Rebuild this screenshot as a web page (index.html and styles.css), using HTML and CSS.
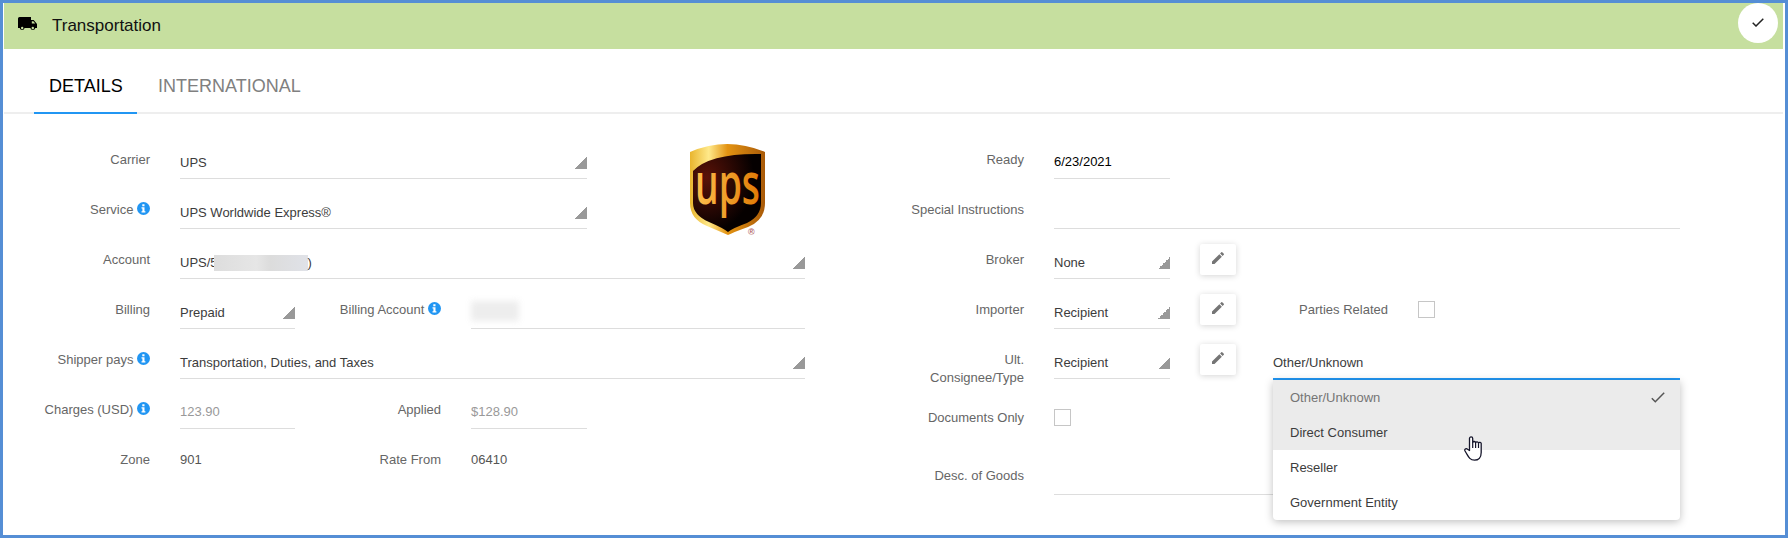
FILE: index.html
```html
<!DOCTYPE html>
<html lang="en">
<head>
<meta charset="utf-8">
<title>Transportation</title>
<link rel="stylesheet" href="styles.css">
</head>
<body>
<svg class="defs" width="0" height="0" aria-hidden="true">
  <symbol id="info" viewBox="0 0 13 13"><circle cx="6.5" cy="6.5" r="6.5" fill="#2196f3"/><path fill="#fff" d="M5.3 2.2h2.2v2H5.300zM4.500 5.200h3v4h.9v1.400H4.500V9.200h.9V6.600h-.9z"/></symbol>
  <symbol id="pencil" viewBox="0 0 24 24"><path fill="#757575" d="M3 17.250V21h3.750L17.810 9.940l-3.750-3.750L3 17.250zM20.710 7.040a1 1 0 0 0 0-1.410l-2.340-2.340a1 1 0 0 0-1.410 0l-1.830 1.830 3.750 3.750 1.830-1.830z"/></symbol>
</svg>
<main class="panel">
  <header class="bar">
    <svg class="truck" viewBox="0 0 19 14"><path fill="#000" d="M1.500 0H13v3h2.700L19 7v4h-1.700a2.500 2.500 0 0 1-4.900 0H6.600a2.500 2.500 0 0 1-4.900 0H0V1.500Q0 0 1.500 0z"/><path fill="#c6df9f" d="M13.800 4.200h1.600L17.200 6.500h-3.400z"/><circle cx="4.200" cy="11" r="1.200" fill="#c6df9f"/><circle cx="14.800" cy="11" r="1.200" fill="#c6df9f"/></svg>
    <h1 class="title">Transportation</h1>
    <button class="done"><svg width="12" height="9" viewBox="0 0 12 9"><path d="M.7 4.800 4 8 11.300.7" fill="none" stroke="#222" stroke-width="1.500"/></svg></button>
  </header>
  <nav class="tabs"><a class="tab active">DETAILS</a><a class="tab">INTERNATIONAL</a></nav>
  <div class="form">
    <section class="left">
      <div class="row"><label class="label">Carrier</label><div class="field wide select">UPS</div>
        <svg class="logo" viewBox="0 0 75 91">
          <defs>
            <linearGradient id="gold" x1="0" x2="1"><stop offset="0" stop-color="#e9b52e"/><stop offset=".25" stop-color="#ffe98a"/><stop offset=".5" stop-color="#e39312"/><stop offset="1" stop-color="#a95a08"/></linearGradient>
            <linearGradient id="letters" x1="0" x2="1"><stop offset="0" stop-color="#ffc04d"/><stop offset="1" stop-color="#e07a05"/></linearGradient>
            <radialGradient id="dark" cx=".2" cy=".3" r=".7"><stop offset="0" stop-color="#5a1208"/><stop offset="1" stop-color="#050000"/></radialGradient>
          </defs>
          <path fill="url(#gold)" d="M0 8Q37-8 75 8v51q0 17-17 24-14 5-20 8-7-3-21-9Q0 75 0 59z"/>
          <path fill="url(#dark)" d="M3 27Q20 9 71 10v49q0 13-14 20-14 5-19 9-5-4-19-10Q3 71 3 59z"/>
          <text class="logo-text" x="5" y="60" textLength="65" lengthAdjust="spacingAndGlyphs" fill="url(#letters)">ups</text>
          <text class="logo-mark" x="58" y="91" fill="#b36a6a">®</text>
        </svg>
      </div>
      <div class="row"><label class="label">Service <svg class="info"><use href="#info"/></svg></label><div class="field wide select">UPS Worldwide Express®</div></div>
      <div class="row"><label class="label">Account</label><div class="field full select">UPS/5<span class="redacted"></span>)</div></div>
      <div class="row"><label class="label">Billing</label><div class="field short select">Prepaid</div><label class="label second">Billing Account <svg class="info"><use href="#info"/></svg></label><div class="field rest"><span class="redacted soft"></span></div></div>
      <div class="row"><label class="label">Shipper pays <svg class="info"><use href="#info"/></svg></label><div class="field full select">Transportation, Duties, and Taxes</div></div>
      <div class="row"><label class="label">Charges (USD) <svg class="info"><use href="#info"/></svg></label><div class="field short input muted">123.90</div><label class="label second">Applied</label><div class="field applied input muted">$128.90</div></div>
      <div class="row"><label class="label">Zone</label><div class="static short">901</div><label class="label second">Rate From</label><div class="static">06410</div></div>
    </section>
    <section class="right">
      <div class="row"><label class="label">Ready</label><div class="field small input date">6/23/2021</div></div>
      <div class="row"><label class="label">Special Instructions</label><div class="field long"></div></div>
      <div class="row"><label class="label">Broker</label><div class="field small select">None</div><button class="edit"><svg><use href="#pencil"/></svg></button></div>
      <div class="row"><label class="label">Importer</label><div class="field small select">Recipient</div><button class="edit"><svg><use href="#pencil"/></svg></button><label class="label related">Parties Related</label><span class="checkbox"></span></div>
      <div class="row"><label class="label">Ult. Consignee/Type</label><div class="field small select">Recipient</div><button class="edit"><svg><use href="#pencil"/></svg></button>
        <div class="field open">Other/Unknown
          <ul class="menu">
            <li class="option hover chosen">Other/Unknown<svg width="14" height="11" viewBox="0 0 14 11"><path d="M.8 6.200 4.300 9.700 13.200.8" fill="none" stroke="#555" stroke-width="1.500"/></svg></li>
            <li class="option hover">Direct Consumer</li>
            <li class="option">Reseller</li>
            <li class="option">Government Entity</li>
          </ul>
          <svg class="pointer" viewBox="0 0 18 25"><path fill="#fff" stroke="#15152a" stroke-width="1.300" stroke-linejoin="round" d="M5.500 14.500V2.500a1.600 1.600 0 0 1 3.200 0V6.500a1.500 1.500 0 0 1 2.900.3 1.500 1.500 0 0 1 2.900.5 1.400 1.400 0 0 1 2.700.7v8.500c0 5-2.700 7.700-6.700 7.700-4.500 0-6-3.200-8-6.700L.9 14.700c-.7-2 1.600-2.500 2.600-1.400z"/><path stroke="#15152a" stroke-width="1.200" d="M8.700 6.500V12M11.600 7v5M14.500 7.500V12"/></svg>
        </div>
      </div>
      <div class="row docs"><label class="label">Documents Only</label><span class="checkbox"></span></div>
      <div class="row"><label class="label">Desc. of Goods</label><div class="field long"></div></div>
    </section>
  </div>
</main>
</body>
</html>
```

FILE: styles.css
```css
* { box-sizing: border-box; }
body { margin: 0; font: 13px/18px "Liberation Sans", Arial, sans-serif; color: #3c3c3c; background: #fff; }
.defs { position: absolute; }
.panel { height: 538px; border: 3px solid #558ed5; padding: 0 2px 0 1px; overflow: hidden; }
button { border: 0; padding: 0; background: #fff; display: flex; align-items: center; justify-content: center; }

.bar { display: flex; height: 46px; background: #c6df9f; padding: 0 5px 0 14px; }
.truck { width: 19px; height: 14px; margin-top: 14px; }
.title { margin: 0 auto 0 15px; font-size: 17px; font-weight: 400; line-height: 46px; color: #111; }
.done { width: 40px; height: 40px; border-radius: 50%; padding-bottom: 1px; }

.tabs { display: flex; height: 65px; padding-left: 30px; border-bottom: 2px solid #eee; }
.tab { height: 65px; padding: 0 15px; font-size: 18px; line-height: 74px; color: #808080; }
.tab + .tab { padding-left: 21px; }
.tab.active { width: 103px; color: #000; border-bottom: 2px solid #2196f3; }

.form { display: flex; padding-top: 15px; }
.left { width: 804px; flex: none; padding-left: 26px; }
.right { padding-left: 76px; }
.row { display: flex; height: 50px; }
.label { flex: none; width: 120px; padding-top: 22px; text-align: right; color: #666; }
.label.second { width: 146px; }
.label.related { width: 152px; margin-right: 30px; }
.info { width: 13px; height: 13px; vertical-align: -1px; }
.field { flex: none; height: 50px; margin-left: 30px; padding-top: 25px; border-bottom: 1px solid #ddd; }
.short { width: 115px; }
.wide { width: 407px; }
.full { width: 625px; }
.rest { width: 334px; padding-top: 22px; }
.applied { width: 116px; }
.small { width: 116px; }
.long { width: 626px; }
.input { padding-top: 24px; }
.date { color: #000; }
.muted { color: #999; }
.static { margin-left: 30px; padding-top: 22px; color: #555; }
.select { background: linear-gradient(135deg, transparent 50%, #999 50%) right 0 top 28px / 12px 12px no-repeat; }
.redacted { display: inline-block; width: 94px; height: 16px; margin-left: -4px; vertical-align: -4px; background: linear-gradient(90deg, #ddd, #e6e6e6 45%, #dcdcdc 60%, #e0e2e8); }
.redacted.soft { width: 48px; height: 20px; margin-left: 0; background: #ededed; filter: blur(3px); }
.logo { width: 75px; height: 91px; margin: 15px 0 0 103px; flex: none; overflow: visible; }
.logo-text { font: 600 57px "Open Sans", sans-serif; }
.logo-mark { font: bold 9px "Liberation Sans", sans-serif; }

.right .label:first-child { width: 140px; padding-left: 40px; }
.right .row:nth-child(2) .label, .right .docs .label, .right .row:last-child .label { padding-left: 0; }
.edit { width: 36px; height: 31px; margin: 15px 0 0 30px; border-radius: 2px; box-shadow: 0 1px 6px rgba(0, 0, 0, .17); }
.edit svg { width: 16px; height: 16px; margin-bottom: 3px; }
.checkbox { width: 17px; height: 17px; margin-top: 22px; border: 1px solid #c6c6c6; }
.right .docs { height: 66px; }
.right .docs .label { padding-top: 30px; }
.docs .checkbox { margin: 30px 0 0 30px; }
.open { position: relative; width: 407px; margin-left: 37px; height: 51px; border-bottom: 2px solid #2196f3; }
.menu { position: absolute; top: 51px; left: 0; width: 407px; margin: 0; padding: 0; list-style: none; background: #fff; border-radius: 0 0 4px 4px; box-shadow: 0 2px 8px rgba(0, 0, 0, .25); }
.option { display: flex; justify-content: space-between; align-items: center; height: 35px; padding: 0 15px 0 17px; }
.hover { background: #ebebeb; }
.chosen { color: #757575; }
.pointer { position: absolute; left: 191px; top: 107px; width: 18px; height: 25px; }
```
